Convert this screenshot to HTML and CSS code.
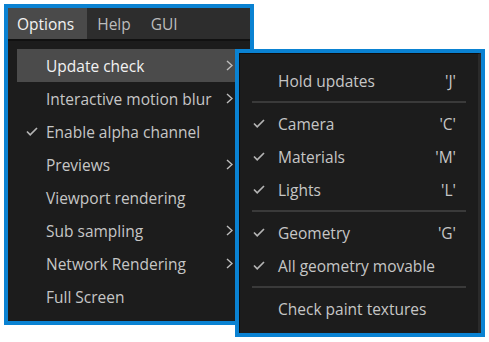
FILE: index.html
```html
<!DOCTYPE html>
<html>
<head>
<meta charset="utf-8">
<link rel="stylesheet" href="styles.css">
</head>
<body>
<div class="stage">
  <div class="window">
    <div class="menubar">
      <span class="mb-item active">Options</span>
      <span class="mb-item">Help</span>
      <span class="mb-item">GUI</span>
    </div>
    <div class="dropdown">
      <div class="row hl"><span class="chk"></span><span class="label">Update check</span><svg class="arrow" viewBox="0 0 7 11"><polyline points="1,1 6,5.5 1,10"/></svg></div>
      <div class="row"><span class="chk"></span><span class="label">Interactive motion blur</span><svg class="arrow" viewBox="0 0 7 11"><polyline points="1,1 6,5.5 1,10"/></svg></div>
      <div class="row"><span class="chk"><svg class="tick" viewBox="0 0 12 9"><polyline points="1,4.5 4.2,7.8 11,1"/></svg></span><span class="label">Enable alpha channel</span></div>
      <div class="row"><span class="chk"></span><span class="label">Previews</span><svg class="arrow" viewBox="0 0 7 11"><polyline points="1,1 6,5.5 1,10"/></svg></div>
      <div class="row"><span class="chk"></span><span class="label">Viewport rendering</span></div>
      <div class="row"><span class="chk"></span><span class="label">Sub sampling</span><svg class="arrow" viewBox="0 0 7 11"><polyline points="1,1 6,5.5 1,10"/></svg></div>
      <div class="row"><span class="chk"></span><span class="label">Network Rendering</span><svg class="arrow" viewBox="0 0 7 11"><polyline points="1,1 6,5.5 1,10"/></svg></div>
      <div class="row"><span class="chk"></span><span class="label">Full Screen</span></div>
    </div>
  </div>

  <div class="submenu">
    <div class="sub-inner">
      <div class="srow"><span class="schk"></span><span class="label">Hold updates</span><span class="key">'J'</span></div>
      <div class="sep"></div>
      <div class="srow"><span class="schk"><svg class="tick" viewBox="0 0 12 9"><polyline points="1,4.5 4.2,7.8 11,1"/></svg></span><span class="label">Camera</span><span class="key">'C'</span></div>
      <div class="srow"><span class="schk"><svg class="tick" viewBox="0 0 12 9"><polyline points="1,4.5 4.2,7.8 11,1"/></svg></span><span class="label">Materials</span><span class="key">'M'</span></div>
      <div class="srow"><span class="schk"><svg class="tick" viewBox="0 0 12 9"><polyline points="1,4.5 4.2,7.8 11,1"/></svg></span><span class="label">Lights</span><span class="key">'L'</span></div>
      <div class="sep"></div>
      <div class="srow"><span class="schk"><svg class="tick" viewBox="0 0 12 9"><polyline points="1,4.5 4.2,7.8 11,1"/></svg></span><span class="label">Geometry</span><span class="key">'G'</span></div>
      <div class="srow"><span class="schk"><svg class="tick" viewBox="0 0 12 9"><polyline points="1,4.5 4.2,7.8 11,1"/></svg></span><span class="label">All geometry movable</span><span class="key"></span></div>
      <div class="sep"></div>
      <div class="srow"><span class="schk"></span><span class="label">Check paint textures</span><span class="key"></span></div>
    </div>
  </div>
</div>
</body>
</html>
```

FILE: styles.css
```css
html, body {
  margin: 0;
  padding: 0;
  background: #ffffff;
}

body {
  font-family: "Open Sans", "Noto Sans", "DejaVu Sans", sans-serif;
  font-size: 15.5px;
  color: #c6c6c6;
}

.stage {
  position: relative;
  width: 489px;
  height: 342px;
  padding: 4px 0 0 4px;
  box-sizing: border-box;
}

.window {
  width: 250px;
  height: 321px;
  box-sizing: border-box;
  border: 4px solid #0a82d2;
  background: #1c1c1c;
  display: flex;
  flex-direction: column;
}

.menubar {
  height: 31px;
  background: #2d2d2d;
  display: flex;
  align-items: stretch;
  flex-shrink: 0;
}

.mb-item {
  display: flex;
  align-items: center;
  padding: 0 10px;
  color: #bcbcbc;
}

.mb-item.active {
  background: #4a4a4a;
  color: #f2f2f2;
  padding: 0 13px 0 9px;
}

.dropdown {
  border-top: 2px solid #111111;
  padding: 8px 0 8px 9px;
  display: flex;
  flex-direction: column;
}

.row {
  height: 33px;
  width: 225px;
  display: flex;
  align-items: center;
  padding-right: 9px;
  box-sizing: border-box;
}

.row.hl {
  background: #4b4b4b;
  color: #f2f2f2;
}

.chk {
  width: 29px;
  display: flex;
  justify-content: center;
  flex-shrink: 0;
}

.label {
  flex: 1;
  white-space: nowrap;
}

.arrow {
  width: 7px;
  height: 11px;
  fill: none;
  stroke: #bdbdbd;
  stroke-width: 1.4;
}

.tick {
  width: 12px;
  height: 9px;
  fill: none;
  stroke: #b4b4b4;
  stroke-width: 1.7;
}

.submenu {
  position: absolute;
  left: 235px;
  top: 49px;
  width: 250px;
  height: 288px;
  box-sizing: border-box;
  border: 4px solid #0a82d2;
  background: #1c1c1c;
}

.sub-inner {
  height: 100%;
  box-sizing: border-box;
  border-top: 1px solid #0e0e0e;
  border-left: 1px solid #0e0e0e;
  border-right: 3px solid #2a2a2a;
  padding: 10px 0 8px 0;
  display: flex;
  flex-direction: column;
}

.srow {
  height: 33px;
  display: flex;
  align-items: center;
  padding-right: 22px;
}

.schk {
  width: 38px;
  flex-shrink: 0;
  display: flex;
  justify-content: center;
}

.key {
  white-space: nowrap;
}

.sep {
  height: 10px;
  margin: 0 12px;
  display: flex;
  align-items: center;
}

.sep::before {
  content: "";
  display: block;
  width: 100%;
  height: 2px;
  background: #3a3a3a;
}
```
